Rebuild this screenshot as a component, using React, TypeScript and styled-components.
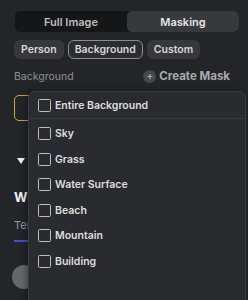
import React from 'react';
import styled, { createGlobalStyle } from 'styled-components';

const Global = createGlobalStyle`
  html, body { margin: 0; padding: 0; background: #242529; }
  body { font-family: Inter, "Noto Sans", sans-serif; -webkit-font-smoothing: antialiased; }
`;

const Panel = styled.div`
  position: relative;
  width: 248px;
  height: 300px;
  overflow: hidden;
  background: #242529;
  padding: 11px 9px 0 14px;
  box-sizing: border-box;
`;

const Segmented = styled.div`
  display: grid;
  grid-template-columns: 1fr 1fr;
  margin-left: 1px;
  height: 21px;
  background: #151618;
  border-radius: 5px;
  overflow: hidden;
`;

const Segment = styled.div<{ $active?: boolean }>`
  display: flex;
  align-items: center;
  justify-content: center;
  font-size: 11px;
  font-weight: 600;
  color: ${p => (p.$active ? '#e6e6e6' : '#bdbdbd')};
  background: ${p => (p.$active ? '#38393d' : 'transparent')};
  border-radius: 5px;
`;

const ChipRow = styled.div`
  display: flex;
  gap: 4px;
  margin-top: 8px;
`;

const Chip = styled.div<{ $active?: boolean }>`
  height: 19px;
  padding: 0 6px;
  display: flex;
  align-items: center;
  font-size: 10.5px;
  font-weight: 600;
  color: #d6d6d6;
  background: ${p => (p.$active ? '#2c2d31' : '#37383c')};
  border: 1px solid ${p => (p.$active ? '#8e8e8e' : 'transparent')};
  border-radius: 6px;
  box-sizing: border-box;
`;

const LabelRow = styled.div`
  display: flex;
  align-items: center;
  justify-content: space-between;
  margin-top: 9px;
  padding-right: 9px;
  height: 16px;
`;

const Label = styled.span`
  font-size: 10.5px;
  color: #8f9094;
`;

const CreateMask = styled.div`
  display: flex;
  align-items: center;
  gap: 3px;
  font-size: 11.5px;
  font-weight: 700;
  color: #a9aaad;
`;

const PlusCircle = styled.span`
  width: 13px;
  height: 13px;
  border-radius: 50%;
  background: #46474b;
  color: #b8b8b8;
  display: flex;
  align-items: center;
  justify-content: center;
  font-size: 11px;
  font-weight: 400;
  line-height: 1;
`;

const AddButton = styled.div`
  margin-top: 11px;
  width: 26px;
  height: 26px;
  border: 1.5px solid #c9a532;
  border-radius: 5px;
  box-sizing: border-box;
  display: flex;
  align-items: center;
  justify-content: flex-end;
  padding-right: 1px;
  color: #e0e0e0;
  font-size: 10px;
`;

const Caret = styled.div`
  margin-top: 37px;
  margin-left: 3px;
  width: 0;
  height: 0;
  border-left: 4px solid transparent;
  border-right: 4px solid transparent;
  border-top: 6px solid #f0f0f0;
`;

const SectionTitle = styled.div`
  margin-top: 25px;
  font-size: 13px;
  font-weight: 700;
  color: #f2f2f2;
`;

const SubLabel = styled.div`
  margin-top: 13px;
  font-size: 11px;
  color: #9a9a9e;
`;

const Underline = styled.div`
  margin-top: 8px;
  width: 16px;
  height: 2px;
  background: #4b4bd6;
`;

const Knob = styled.div`
  margin-top: 23px;
  margin-left: -2px;
  width: 24px;
  height: 24px;
  border-radius: 50%;
  background: #66676b;
`;

const Menu = styled.div`
  position: absolute;
  left: 28px;
  top: 91px;
  width: 218px;
  height: 230px;
  background: #2a2b2f;
  border: 1px solid #3a3b3f;
  border-radius: 7px;
  box-shadow: -2px 0 6px rgba(0, 0, 0, 0.35);
  box-sizing: border-box;
  padding: 0 0 0 9px;
`;

const MenuItem = styled.div<{ $head?: boolean }>`
  display: flex;
  align-items: center;
  gap: 4px;
  height: ${p => (p.$head ? '26px' : '25.5px')};
  font-size: 10.5px;
  font-weight: 600;
  color: #dedede;
`;

const Divider = styled.div`
  height: 1px;
  background: #38393d;
  margin: 0 0 2px -9px;
`;

const Box = styled.span`
  width: 13px;
  height: 13px;
  border: 1.5px solid #bdbdbd;
  border-radius: 1.5px;
  box-sizing: border-box;
  flex-shrink: 0;
`;

const items = ['Sky', 'Grass', 'Water Surface', 'Beach', 'Mountain', 'Building'];

export default function App() {
  return (
    <>
      <Global />
      <Panel>
        <Segmented>
          <Segment>Full Image</Segment>
          <Segment $active>Masking</Segment>
        </Segmented>
        <ChipRow>
          <Chip>Person</Chip>
          <Chip $active>Background</Chip>
          <Chip>Custom</Chip>
        </ChipRow>
        <LabelRow>
          <Label>Background</Label>
          <CreateMask>
            <PlusCircle>+</PlusCircle>
            Create Mask
          </CreateMask>
        </LabelRow>
        <AddButton>+</AddButton>
        <Caret />
        <SectionTitle>White Balance</SectionTitle>
        <SubLabel>Temperature</SubLabel>
        <Underline />
        <Knob />

        <Menu>
          <MenuItem $head>
            <Box />
            Entire Background
          </MenuItem>
          <Divider />
          {items.map(it => (
            <MenuItem key={it}>
              <Box />
              {it}
            </MenuItem>
          ))}
        </Menu>
      </Panel>
    </>
  );
}
